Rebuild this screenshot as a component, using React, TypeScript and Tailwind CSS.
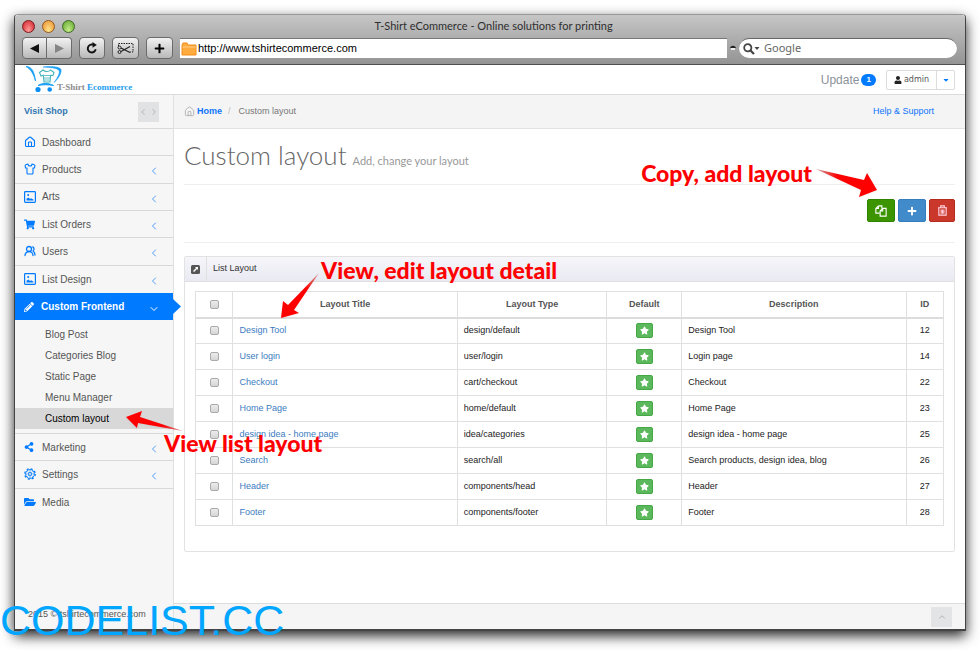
import React from 'react';
import { ChevronDown, ChevronLeft, ChevronRight, ChevronUp, House, Image, Shirt, UsersRound } from 'lucide-react';
import { FaCaretDown, FaFolderOpen, FaPencilAlt, FaPlus, FaShareAlt, FaShoppingCart, FaStar, FaUser } from 'react-icons/fa';

const sans = "font-['Liberation_Sans',Arial,sans-serif]";
const lato = "font-['Lato',sans-serif]";

const layouts = [
  { title: 'Design Tool', type: 'design/default', description: 'Design Tool', id: 12 },
  { title: 'User login', type: 'user/login', description: 'Login page', id: 14 },
  { title: 'Checkout', type: 'cart/checkout', description: 'Checkout', id: 22 },
  { title: 'Home Page', type: 'home/default', description: 'Home Page', id: 23 },
  { title: 'design idea - home page', type: 'idea/categories', description: 'design idea - home page', id: 25 },
  { title: 'Search', type: 'search/all', description: 'Search products, design idea, blog', id: 26 },
  { title: 'Header', type: 'components/head', description: 'Header', id: 27 },
  { title: 'Footer', type: 'components/footer', description: 'Footer', id: 28 },
];

function GearIcon() {
  return (
    <svg viewBox="0 0 24 24" className="size-3" fill="none" stroke="currentColor" strokeWidth="1.8">
      <circle cx="12" cy="12" r="10.5" strokeWidth="2.400" strokeDasharray="4.2 4.05" />
      <circle cx="12" cy="12" r="8.8" />
      <circle cx="12" cy="12" r="3" />
      <path d="M12 4v5M12 15v5M4 12h5M15 12h5M6.5 6.5l3.3 3.3M14.2 14.2l3.3 3.3M17.5 6.5l-3.3 3.3M9.8 14.2l-3.3 3.3" strokeWidth="1" />
    </svg>
  );
}

function PictureIcon() {
  return (
    <svg viewBox="0 0 12 12" className="size-3" fill="none" stroke="currentColor" strokeWidth="1.200">
      <rect x="0.600" y="0.600" width="10.800" height="10.800" rx="0.800" />
      <path d="M2.500 9.500V7.800L4.500 6.500L6 8L7.200 7.300L9.500 8.800V9.500Z" fill="currentColor" stroke="none" />
      <circle cx="4.200" cy="4" r="1" fill="currentColor" stroke="none" />
    </svg>
  );
}

function LogoMark() {
  return (
    <svg viewBox="0 0 37 27" className="h-[27px] w-[37px]" fill="none">
      <path d="M0 0.500C6 1 8 5 9.500 15C8 9 5 3 0 0.500Z" fill="#1aa0f5" stroke="#1aa0f5" strokeWidth="0.9" />
      <path d="M17 1C27 0 34 1 35 3.500C36 8 31 14 28 16.500C32 11 34 7 33 4.500C31 2 25 1.500 17 1Z" fill="#1aa0f5" stroke="#1aa0f5" strokeWidth="0.5" />
      <path d="M12 19.500C17 16.500 23 17 27.500 19.500C22 18.500 17 18.500 12 19.500Z" fill="#1aa0f5" stroke="#1aa0f5" />
      <path d="M17 4L13.500 6.500L15 10L17.300 9.300L18 16H24L24.600 9.300L27 9.500L28 6.500L24.500 4C23 6 19 6 17 4Z" stroke="#43b4ba" strokeWidth="1.1" />
      <path d="M18 9.500H24M18 12H24M18.500 14H23.500" stroke="#43b4ba" strokeWidth="0.8" />
      <circle cx="12" cy="23.500" r="2.600" fill="#0b8ef5" />
      <circle cx="23.700" cy="23.500" r="2.300" fill="#0b8ef5" />
    </svg>
  );
}

const toolButton =
  'flex h-[22px] items-center justify-center rounded border border-[#6b6b6b] bg-linear-to-b from-[#f2f2f2] to-[#b9b9b9] text-black';

function BrowserChrome() {
  return (
    <div className="flex h-[50px] flex-col rounded-t border-b border-[#4f4f4f] bg-linear-to-b from-[#c6c6c6] to-[#949494]">
      <div className="flex h-[22px] items-center">
        <div className="flex flex-1 gap-[7px] pl-[7px]">
          <span className="size-[13px] rounded-full border border-[#7a1a1c] bg-radial-[at_50%_85%] from-[#ff9b96] to-[#cf1c26]" />
          <span className="size-[13px] rounded-full border border-[#95591d] bg-radial-[at_50%_85%] from-[#ffe58b] to-[#e88d2c]" />
          <span className="size-[13px] rounded-full border border-[#3d6822] bg-radial-[at_50%_85%] from-[#c6ec8b] to-[#5ba52b]" />
        </div>
        <h2 className={`${lato} text-[11px] leading-4 text-[#2f2f2f]`}>T-Shirt eCommerce - Online solutions for printing</h2>
        <div className="flex-1" />
      </div>
      <div className="flex items-center gap-[7px] pr-2 pl-[7px]">
        <div className="flex">
          <button type="button" aria-label="Back" className={`${toolButton} w-[25px] rounded-r-none`}>
            <svg viewBox="0 0 9 9" className="size-[9px]"><path d="M0 4.500L9 0V9Z" fill="#111" /></svg>
          </button>
          <button type="button" aria-label="Forward" className={`${toolButton} w-[25px] rounded-l-none border-l-0`}>
            <svg viewBox="0 0 9 9" className="size-[9px]"><path d="M9 4.500L0 0V9Z" fill="#858585" /></svg>
          </button>
        </div>
        <button type="button" aria-label="Reload" className={`${toolButton} w-[26px]`}>
          <svg viewBox="0 0 12 12" className="size-3" fill="none">
            <path d="M9.700 7.300A4 4 0 1 1 7 2.700" stroke="#111" strokeWidth="1.900" />
            <path d="M6.500 0L10.800 2.900L6.500 5.800Z" fill="#111" />
          </svg>
        </button>
        <button type="button" aria-label="Clip" className={`${toolButton} w-[27px]`}>
          <svg viewBox="0 0 17 13" className="h-[13px] w-[17px]" fill="none" stroke="#222">
            <path d="M1.500 4V1.500H16V10H13" strokeDasharray="1.500 1" />
            <circle cx="2.500" cy="5.500" r="1.500" />
            <circle cx="2.500" cy="10" r="1.500" />
            <path d="M4 6L13 10.500M4 9.500L13 4.500" strokeWidth="1.200" />
          </svg>
        </button>
        <button type="button" aria-label="Add bookmark" className={`${toolButton} w-[27px]`}>
          <FaPlus className="size-[11px]" />
        </button>
        <label className="flex h-5 flex-1 items-center gap-px border-t border-[#777] bg-white pl-px">
          <svg viewBox="0 0 16 14" className="h-[14px] w-4">
            <path d="M1 13V3L2 1H6L7 3H15V13Z" fill="#ffab3d" stroke="#f08c1c" />
            <path d="M1.500 5H14.500" stroke="#ffd08a" />
          </svg>
          <input aria-label="Address" defaultValue="http://www.tshirtecommerce.com" className={`${sans} min-w-0 flex-1 text-[11px] text-black outline-none`} />
        </label>
        <svg viewBox="0 0 6 6" className="-mx-1 size-[6px]">
          <path d="M0 3C1 0 5 0 6 3Z" fill="#222" />
          <path d="M1 3H5V5H1Z" fill="#eee" />
        </svg>
        <label className="flex h-5 w-[218px] items-center gap-1 rounded-full border-t border-[#666] bg-white pl-1">
          <svg viewBox="0 0 17 12" className="h-3 w-[17px]" fill="none" stroke="#444">
            <circle cx="4.800" cy="4.800" r="3.600" strokeWidth="1.800" />
            <path d="M7.500 7.500L11 11" strokeWidth="2.200" />
            <path d="M11.500 4H16.500L14 7Z" fill="#444" stroke="none" />
          </svg>
          <input aria-label="Search" placeholder="Google" className="min-w-0 flex-1 font-['Noto_Sans',sans-serif] text-[11px] outline-none placeholder:text-[#666]" />
        </label>
      </div>
    </div>
  );
}

function TopBar() {
  return (
    <header className="flex h-[30px] items-center border-b border-[#dcdcdc] bg-white pr-[10px] pl-[11px]">
      <a href="#home" className="flex items-end">
        <LogoMark />
        <span className="-ml-[6px] font-['Liberation_Serif',serif] text-[9px] leading-[11px] font-bold text-[#8c8c8c]">
          T-Shirt <span className="text-[#1b9df0]">Ecommerce</span>
        </span>
      </a>
      <a href="#update" className={`${sans} ml-auto flex items-center gap-[2px] text-[12px] text-[#8b9299]`}>
        Update
        <span className="rounded-full bg-[#007aff] px-[5px] text-[8px] leading-3 font-bold text-white">1</span>
      </a>
      <div className="ml-[10px] flex h-5 rounded-xs border border-[#dcdcdc]">
        <button type="button" className="flex items-center gap-[2px] px-[7px] font-['DejaVu_Sans',sans-serif] text-[8px] text-[#555]">
          <FaUser className="size-2 text-[#222]" />
          admin
        </button>
        <button type="button" aria-label="Account menu" className="flex w-[18px] items-center justify-center border-l border-[#dcdcdc] text-[#007aff]">
          <FaCaretDown className="size-2" />
        </button>
      </div>
    </header>
  );
}

function NavItem({ icon, label, expandable = true, last = false }: { icon: React.ReactNode; label: string; expandable?: boolean; last?: boolean }) {
  return (
    <li className={`flex flex-1 basis-[27px] border-[#d9d9d9] ${last ? '' : 'border-b'}`}>
      <a href="#nav" className="flex flex-1 items-center px-[9px] text-[#555]">
        <span className="mr-[6px] flex size-3 items-center text-[#007aff]">{icon}</span>
        {label}
        {expandable && <ChevronLeft className="mt-1 mr-1 ml-auto size-3 text-[#3a93fb]" strokeWidth={1.8} />}
      </a>
    </li>
  );
}

const subItem = 'block h-[21px] pl-[30px] leading-[21px]';

function Sidebar() {
  return (
    <aside className={`${sans} flex w-[159px] shrink-0 flex-col border-r border-[#e0e0e0] bg-[#f6f6f6] text-[10px]`}>
      <div className="flex h-[34px] items-center justify-between border-b border-[#d9d9d9] pr-[14px] pl-[9px]">
        <a href="#shop" className="text-[9px] font-bold text-[#3276b1]">Visit Shop</a>
        <button type="button" aria-label="Collapse menu" className="flex h-5 w-[21px] items-center justify-between bg-[#e0e2e4] text-[#a9adb0]">
          <ChevronLeft className="size-[10px]" />
          <ChevronRight className="size-[10px]" />
        </button>
      </div>
      <nav>
        <ul className="flex h-[164px] flex-col">
          <NavItem icon={<House className="size-3" strokeWidth={2.200} />} label="Dashboard" expandable={false} />
          <NavItem icon={<Shirt className="size-3" strokeWidth={2.200} />} label="Products" />
          <NavItem icon={<PictureIcon />} label="Arts" />
          <NavItem icon={<FaShoppingCart className="size-[11px]" />} label="List Orders" />
          <NavItem icon={<UsersRound className="size-3" strokeWidth={2.600} />} label="Users" />
          <NavItem icon={<PictureIcon />} label="List Design" last />
        </ul>
        <a href="#frontend" className="relative flex h-[27px] items-center bg-[#007aff] px-[9px] font-bold text-white">
          <FaPencilAlt className="mr-[7px] size-[10px]" />
          Custom Frontend
          <ChevronDown className="mt-1 mr-1 ml-auto size-3" />
          <svg viewBox="0 0 8 15" className="absolute top-[6px] -right-2 h-[15px] w-2"><path d="M0 0L8 7.500L0 15Z" fill="#007aff" /></svg>
        </a>
        <ul className="border-b border-[#d9d9d9] py-1 text-[#555]">
          <li><a href="#blog" className={subItem}>Blog Post</a></li>
          <li><a href="#categories" className={subItem}>Categories Blog</a></li>
          <li><a href="#static" className={subItem}>Static Page</a></li>
          <li><a href="#menu" className={subItem}>Menu Manager</a></li>
          <li><a href="#layout" className={`${subItem} bg-[#d8d8d8] text-black`}>Custom layout</a></li>
        </ul>
        <ul className="flex h-[82px] flex-col">
          <NavItem icon={<FaShareAlt className="size-[10px]" />} label="Marketing" />
          <NavItem icon={<GearIcon />} label="Settings" />
          <NavItem icon={<FaFolderOpen className="size-3" />} label="Media" expandable={false} last />
        </ul>
      </nav>
      <p className="mt-auto pb-[7px] pl-[13px] text-[9px] leading-4 text-[#555]">2015 © tshirtecommerce.com</p>
    </aside>
  );
}

const actionButton = 'flex h-[23px] items-center justify-center rounded-xs border text-white';
const cell = 'border border-[#e0e0e0] px-[6px]';
const box = 'block mx-auto size-[9px] appearance-none rounded-xs border border-[#aaa] bg-linear-to-b from-[#ececec] to-[#d6d6d6]';

function LayoutTable() {
  return (
    <table className="w-full table-fixed border-collapse text-[9px] text-[#222]">
      <colgroup>
        <col className="w-[5%]" />
        <col className="w-[30%]" />
        <col className="w-[20%]" />
        <col className="w-[10%]" />
        <col className="w-[30%]" />
        <col className="w-[5%]" />
      </colgroup>
      <thead>
        <tr className="h-[26px] border-b-2 border-[#dcdcdc] text-[#555]">
          <th className={cell}><input type="checkbox" aria-label="Select all layouts" className={box} /></th>
          <th className={cell}>Layout Title</th>
          <th className={cell}>Layout Type</th>
          <th className={cell}>Default</th>
          <th className={cell}>Description</th>
          <th className={cell}>ID</th>
        </tr>
      </thead>
      <tbody>
        {layouts.map((row) => (
          <tr key={row.id} className="h-[26px]">
            <td className={cell}><input type="checkbox" aria-label={`Select ${row.title}`} className={box} /></td>
            <td className={cell}><a href="#edit" className="text-[#3c7cc0]">{row.title}</a></td>
            <td className={cell}>{row.type}</td>
            <td className={cell}>
              <button type="button" aria-label={`Default ${row.title}`} className="mx-auto flex h-[15px] w-[17px] items-center justify-center rounded-xs border border-[#45a845] bg-[#5cb85c] text-white">
                <FaStar className="size-[9px]" />
              </button>
            </td>
            <td className={cell}>{row.description}</td>
            <td className={`${cell} text-center`}>{row.id}</td>
          </tr>
        ))}
      </tbody>
    </table>
  );
}

const note = `${lato} absolute text-[23px] leading-6 font-black whitespace-nowrap text-[#fe0000]`;

function Content() {
  return (
    <div className={`${sans} flex min-w-0 flex-1 flex-col`}>
      <div className="flex h-[34px] items-center border-b border-[#e2e2e2] bg-[#f4f4f4] pr-[31px] pl-[10px] text-[9px] text-[#888]">
        <House className="size-[11px] text-[#aaa]" strokeWidth={1.8} />
        <a href="#home" className="ml-[2px] font-bold text-[#0d75fb]">Home</a>
        <span className="mx-[6px] text-[#bbb]">/</span>
        <span className="ml-[2px] text-[#777]">Custom layout</span>
        <a href="#help" className="ml-auto text-[#0d75fb]">Help &amp; Support</a>
      </div>
      <main className="flex-1 px-[10px]">
        <h1 className={`${lato} flex h-14 items-baseline gap-[6px] border-b border-[#eee] pt-[10px] text-[26px] leading-8 font-light text-[#666]`}>
          Custom layout
          <small className="text-[11px] font-normal text-[#999]">Add, change your layout</small>
        </h1>
        <div className="relative flex h-[58px] items-start justify-end gap-[3px] border-b border-[#eee] pt-[14px]">
          <button type="button" aria-label="Copy layout" className={`${actionButton} w-7 border-[#2f8300] bg-[#3c9500]`}>
            <svg viewBox="0 0 14 14" className="size-3" fill="none" stroke="currentColor" strokeWidth="1.300">
              <path d="M4 1H8V4M4 1L1 4V9.500H5.500M4 1V4H1" />
              <path d="M9 4H13V13H6V7ZM9 4V7H6" />
            </svg>
          </button>
          <button type="button" aria-label="Add layout" className={`${actionButton} w-7 border-[#357ebd] bg-[#428bca]`}>
            <FaPlus className="size-[10px]" />
          </button>
          <button type="button" aria-label="Delete layout" className={`${actionButton} w-[26px] border-[#b52b1d] bg-[#c9382b]`}>
            <svg viewBox="0 0 12 12" className="size-[11px]" fill="none" stroke="#ffd3e2" strokeWidth="1.200">
              <path d="M1 3H11M4 3V1H8V3M2 3V11H10V3M4.500 5V9.500M6 5V9.500M7.500 5V9.500" />
            </svg>
          </button>
          <p className={`${note} -top-6 right-[143px]`}>Copy, add layout</p>
          <svg viewBox="0 0 62 30" className="absolute -top-4 right-[77px] h-[30px] w-[62px] drop-shadow-xs">
            <defs>
              <linearGradient id="fadeRight"><stop offset="0" stopColor="#c9a0a0" /><stop offset="0.35" stopColor="#fe0000" /></linearGradient>
            </defs>
            <path d="M0 0L48 11L51 4L61 21L43 28L45 21Z" fill="url(#fadeRight)" />
          </svg>
        </div>
        <section className="relative mt-[13px] rounded-xs border border-[#e2e2e2] bg-white">
          <div className="flex h-[25px] items-center border-b border-[#e0e0e0] bg-linear-to-b from-[#f5f5fa] to-[#e9e9f2] text-[9px] text-[#333]">
            <span className="flex h-full w-[22px] items-center justify-center border-r border-[#e0e0e0]">
              <svg viewBox="0 0 9 9" className="size-[9px]">
                <rect width="9" height="9" rx="1.500" fill="#555" />
                <path d="M4 2H7V5L6 4L3 7L2 6L5 3Z" fill="#fff" />
              </svg>
            </span>
            <h3 className="pl-[6px]">List Layout</h3>
          </div>
          <div className="px-[10px] pt-[9px] pb-[25px]">
            <LayoutTable />
          </div>
          <p className={`${note} top-px left-[136px]`}>View, edit layout detail</p>
          <svg viewBox="0 0 40 46" className="absolute top-4 left-24 h-[46px] w-10 drop-shadow-xs">
            <defs>
              <linearGradient id="fadeDown" x1="1" y1="0" x2="0" y2="1"><stop offset="0" stopColor="#c9a0a0" /><stop offset="0.35" stopColor="#fe0000" /></linearGradient>
            </defs>
            <path d="M38 0L13 37L18 40L0 45L2 28L7 32Z" fill="url(#fadeDown)" />
          </svg>
          <p className={`${note} top-[174px] -left-[21px]`}>View list layout</p>
          <svg viewBox="0 0 58 22" className="absolute top-[154px] -left-[59px] h-[22px] w-[58px] drop-shadow-xs">
            <defs>
              <linearGradient id="fadeLeft" x1="1" y1="0" x2="0" y2="0"><stop offset="0" stopColor="#c9a0a0" /><stop offset="0.35" stopColor="#fe0000" /></linearGradient>
            </defs>
            <path d="M57 20L14 6L16 0L0 6L11 17L12 12Z" fill="url(#fadeLeft)" />
          </svg>
        </section>
      </main>
      <footer className="flex h-[26px] items-center justify-end border-t border-[#dcdcdc] bg-[#f5f5f5] pr-[13px]">
        <button type="button" aria-label="Back to top" className="flex h-5 w-[21px] items-center justify-center bg-[#e2e4e6] text-[#aaa]">
          <ChevronUp className="size-[10px]" />
        </button>
      </footer>
    </div>
  );
}

export default function App() {
  return (
    <div className="relative flex min-h-screen flex-col overflow-hidden bg-white px-[14px] pt-[14px] pb-[19px]">
      <div className="flex flex-1 flex-col rounded-t border border-b-2 border-[#444] border-t-[#999] bg-white shadow-[0_5px_13px_rgba(0,0,0,0.85)]">
        <BrowserChrome />
        <TopBar />
        <div className="flex flex-1">
          <Sidebar />
          <Content />
        </div>
      </div>
      <div className={`${sans} absolute bottom-[6px] left-0 text-[43px] leading-[48px] text-[#00a6ff]`}>CODELIST.CC</div>
    </div>
  );
}
